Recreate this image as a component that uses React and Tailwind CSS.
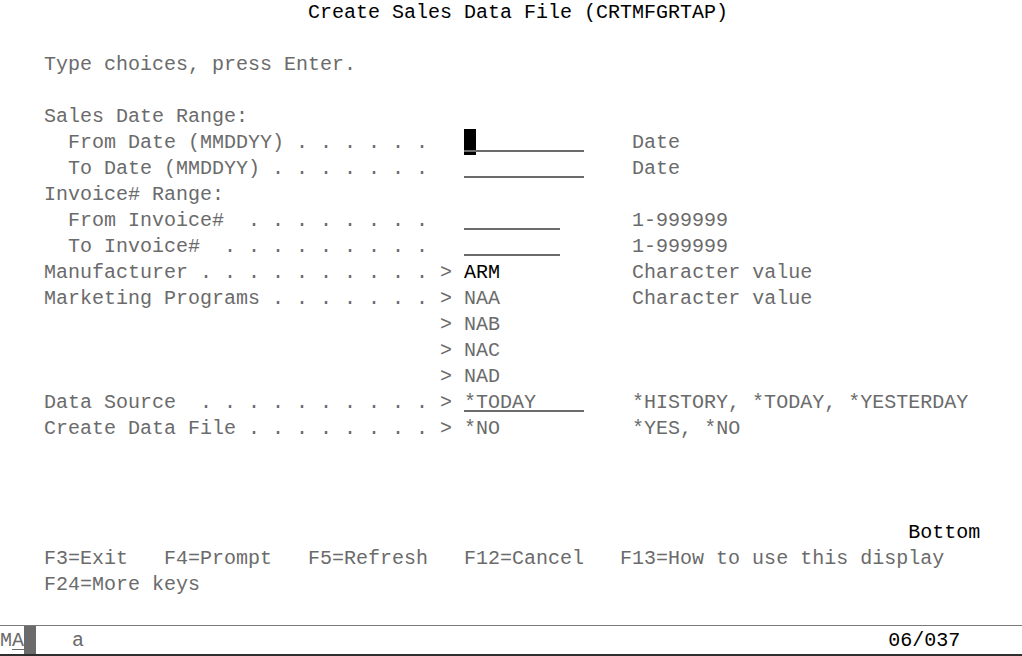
const GREY = "text-[#6b6b6b]";
const HI = "text-black";

// one entry per 5250 screen row; col is 0-based, 12px per column
const rows = [
  [{ col: 25, text: "Create Sales Data File (CRTMFGRTAP)", hi: true }],
  [],
  [{ col: 3, text: "Type choices, press Enter." }],
  [],
  [{ col: 3, text: "Sales Date Range:" }],
  [
    { col: 5, text: "From Date (MMDDYY) . . . . . ." },
    { col: 38, field: "w-[120px]", len: 10, text: "", cursor: true },
    { col: 52, text: "Date" },
  ],
  [
    { col: 5, text: "To Date (MMDDYY) . . . . . . ." },
    { col: 38, field: "w-[120px]", len: 10, text: "" },
    { col: 52, text: "Date" },
  ],
  [{ col: 3, text: "Invoice# Range:" }],
  [
    { col: 5, text: "From Invoice#  . . . . . . . ." },
    { col: 38, field: "w-[96px]", len: 8, text: "" },
    { col: 52, text: "1-999999" },
  ],
  [
    { col: 5, text: "To Invoice#  . . . . . . . . ." },
    { col: 38, field: "w-[96px]", len: 8, text: "" },
    { col: 52, text: "1-999999" },
  ],
  [
    { col: 3, text: "Manufacturer . . . . . . . . . . >" },
    { col: 38, text: "ARM", hi: true },
    { col: 52, text: "Character value" },
  ],
  [
    { col: 3, text: "Marketing Programs . . . . . . . >" },
    { col: 38, text: "NAA" },
    { col: 52, text: "Character value" },
  ],
  [{ col: 36, text: ">" }, { col: 38, text: "NAB" }],
  [{ col: 36, text: ">" }, { col: 38, text: "NAC" }],
  [{ col: 36, text: ">" }, { col: 38, text: "NAD" }],
  [
    { col: 3, text: "Data Source  . . . . . . . . . . >" },
    { col: 38, field: "w-[120px]", len: 10, text: "*TODAY" },
    { col: 52, text: "*HISTORY, *TODAY, *YESTERDAY" },
  ],
  [
    { col: 3, text: "Create Data File . . . . . . . . >" },
    { col: 38, text: "*NO" },
    { col: 52, text: "*YES, *NO" },
  ],
  [],
  [],
  [],
  [{ col: 75, text: "Bottom", hi: true }],
  [
    {
      col: 3,
      text: "F3=Exit   F4=Prompt   F5=Refresh   F12=Cancel   F13=How to use this display",
    },
  ],
  [{ col: 3, text: "F24=More keys" }],
  [],
];

const Row = ({ segs }) => {
  let at = 0;
  const out = [];
  segs.forEach((s, i) => {
    const gap = " ".repeat(Math.max(0, s.col - at));
    if (s.field) {
      if (gap) out.push(<span key={`g${i}`}>{gap}</span>);
      out.push(
        <span key={i} className={`relative inline-block align-top h-[26px] ${s.field} ${GREY}`}>
          {s.cursor && <span className="absolute left-0 top-[-1px] w-[12px] h-[26px] bg-black" />}
          {s.text}
          <span className="absolute left-0 top-[20px] h-[2px] w-full bg-[#6b6b6b]" />
        </span>
      );
    } else {
      out.push(
        <span key={i} className={s.hi ? HI : GREY}>
          {gap + s.text}
        </span>
      );
    }
    at = s.col + (s.len ?? s.text.length);
  });
  return <div className="h-[26px] leading-[26px] whitespace-pre">{out}</div>;
};

export default function App() {
  return (
    <div className="w-[1022px] h-[656px] overflow-hidden bg-white font-['Liberation_Mono','DejaVu_Sans_Mono',monospace] text-[20px]">
      {/* ------------- 24 x 80 screen ------------- */}
      <div className="pl-[8px] h-[624px]">
        {rows.map((segs, i) => (
          <Row key={i} segs={segs} />
        ))}
      </div>

      {/* ------------- operator info line ------------- */}
      <div className="mt-[1px] h-[31px] border-t border-[#7a7a7a] border-b-2 border-b-[#2e2e2e]">
        <div className="h-[28px] leading-[30px] whitespace-pre text-[#6b6b6b]">
          <span>M</span>
          <span className="underline decoration-1 underline-offset-[3px]">A</span>
          <span className="inline-block align-top w-[12px] h-[28px] bg-[#6b6b6b]" />
          <span>{"   a"}</span>
          <span className="text-black">{" ".repeat(67) + "06/037"}</span>
        </div>
      </div>
    </div>
  );
}
